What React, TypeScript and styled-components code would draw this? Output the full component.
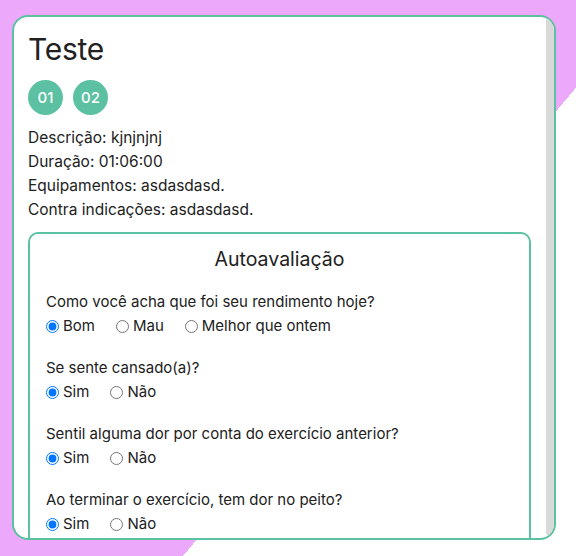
import React from 'react';
import styled, { createGlobalStyle } from 'styled-components';

const GlobalStyle = createGlobalStyle`
  html, body, #root {
    margin: 0;
    padding: 0;
    height: 100%;
  }
  body {
    font-family: Inter, "Liberation Sans", sans-serif;
    color: #212121;
  }
  * {
    box-sizing: border-box;
  }
`;

const StyledPage = styled.div`
  height: 100vh;
  padding: 15px 0 0 12px;
  background: linear-gradient(130deg, #eca8fa 62.3%, #ffffff 62.3%);
  overflow: hidden;
`;

const StyledCard = styled.div`
  width: 544px;
  height: 525px;
  background: #ffffff;
  border: 2px solid #5cc1a2;
  border-radius: 16px;
  display: flex;
  overflow: hidden;
`;

const StyledContent = styled.div`
  flex: 1;
  min-width: 0;
  padding: 14px 15px 0 14px;
  overflow: hidden;
`;

const StyledScrollbar = styled.div`
  width: 8px;
  flex-shrink: 0;
  padding-bottom: 2px;
  display: flex;
`;

const StyledThumb = styled.div`
  flex: 1;
  background: #d9d9d9;
  border-radius: 4px;
`;

const StyledTitle = styled.h1`
  margin: 0;
  font-size: 30px;
  line-height: 36px;
  font-weight: 400;
  letter-spacing: -0.3px;
`;

const StyledBadges = styled.div`
  display: flex;
  gap: 10px;
  margin-top: 13px;
`;

const StyledBadge = styled.div`
  width: 35px;
  height: 35px;
  border-radius: 50%;
  background: #5cc1a2;
  color: #ffffff;
  font-size: 15px;
  font-weight: 500;
  display: flex;
  align-items: center;
  justify-content: center;
`;

const StyledInfo = styled.div`
  margin-top: 11px;
  font-size: 15.5px;
  line-height: 24px;
`;

const StyledBox = styled.div`
  margin-top: 10px;
  border: 2px solid #5cc1a2;
  border-radius: 10px;
  padding: 11px 16px 10px 16px;
`;

const StyledBoxTitle = styled.h2`
  margin: 0;
  font-size: 19.5px;
  line-height: 28px;
  font-weight: 400;
  text-align: center;
`;

const StyledQuestion = styled.div`
  margin-top: 17px;
  & + & {
    margin-top: 18px;
  }
`;

const StyledLabel = styled.div`
  font-size: 15px;
  line-height: 24px;
`;

const StyledOptions = styled.div`
  display: flex;
  gap: 21px;
  font-size: 15px;
  line-height: 24px;
`;

const StyledOption = styled.label`
  display: inline-flex;
  align-items: center;
  input {
    margin: 0 4px 0 0;
  }
`;

const INFO_ITEM = [
  'Descrição: kjnjnjnj',
  'Duração: 01:06:00',
  'Equipamentos: asdasdasd.',
  'Contra indicações: asdasdasd.',
];

const QUESTIONS = [
  {
    id: 'rendimento',
    title: 'Como você acha que foi seu rendimento hoje?',
    options: ['Bom', 'Mau', 'Melhor que ontem'],
  },
  { id: 'cansado', title: 'Se sente cansado(a)?', options: ['Sim', 'Não'] },
  {
    id: 'dor',
    title: 'Sentil alguma dor por conta do exercício anterior?',
    options: ['Sim', 'Não'],
  },
  {
    id: 'peito',
    title: 'Ao terminar o exercício, tem dor no peito?',
    options: ['Sim', 'Não'],
  },
];

const App = () => {
  return (
    <>
      <GlobalStyle />
      <StyledPage>
        <StyledCard>
          <StyledContent>
            <StyledTitle>Teste</StyledTitle>
            <StyledBadges>
              <StyledBadge>01</StyledBadge>
              <StyledBadge>02</StyledBadge>
            </StyledBadges>
            <StyledInfo>
              {INFO_ITEM.map((item) => (
                <div key={item}>{item}</div>
              ))}
            </StyledInfo>
            <StyledBox>
              <StyledBoxTitle>Autoavaliação</StyledBoxTitle>
              {QUESTIONS.map((q) => (
                <StyledQuestion key={q.id}>
                  <StyledLabel>{q.title}</StyledLabel>
                  <StyledOptions>
                    {q.options.map((opt, i) => (
                      <StyledOption key={opt}>
                        <input
                          type="radio"
                          name={q.id}
                          defaultChecked={i === 0}
                        />
                        {opt}
                      </StyledOption>
                    ))}
                  </StyledOptions>
                </StyledQuestion>
              ))}
            </StyledBox>
          </StyledContent>
          <StyledScrollbar>
            <StyledThumb />
          </StyledScrollbar>
        </StyledCard>
      </StyledPage>
    </>
  );
};

export default App;
